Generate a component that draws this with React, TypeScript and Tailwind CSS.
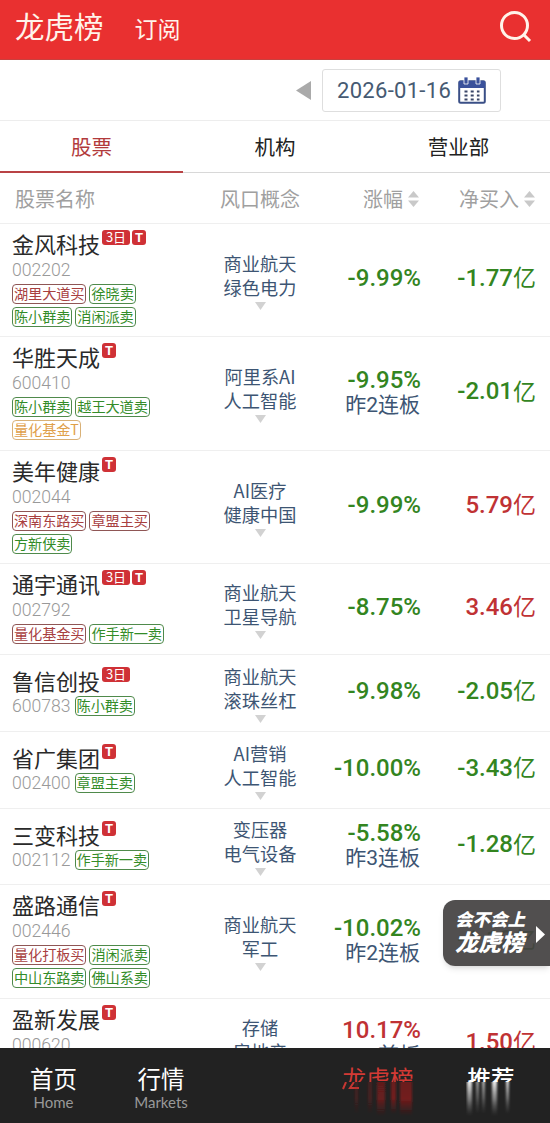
import React from "react";

type Tone = "buy" | "sell" | "quant";

interface Tag {
  text: string;
  tone: Tone;
}

interface Stock {
  name: string;
  code: string;
  badges: string[];
  tags: Tag[];
  inlineTag?: boolean;
  concepts: string[];
  change: string;
  streak?: string;
  net: string;
  rowClass: string;
  changeUp?: boolean;
  netUp?: boolean;
}

const buy = (text: string): Tag => ({ text, tone: "buy" });
const sell = (text: string): Tag => ({ text, tone: "sell" });

const stocks: Stock[] = [
  { name: "金风科技", code: "002202", badges: ["3日", "T"], tags: [buy("湖里大道买"), sell("徐晓卖"), sell("陈小群卖"), sell("消闲派卖")], concepts: ["商业航天", "绿色电力"], change: "-9.99%", net: "-1.77", rowClass: "h-[113px]" },
  { name: "华胜天成", code: "600410", badges: ["T"], tags: [sell("陈小群卖"), sell("越王大道卖"), { text: "量化基金T", tone: "quant" }], concepts: ["阿里系AI", "人工智能"], change: "-9.95%", streak: "昨2连板", net: "-2.01", rowClass: "h-[114px]" },
  { name: "美年健康", code: "002044", badges: ["T"], tags: [buy("深南东路买"), buy("章盟主买"), sell("方新侠卖")], concepts: ["AI医疗", "健康中国"], change: "-9.99%", net: "5.79", netUp: true, rowClass: "h-[113px]" },
  { name: "通宇通讯", code: "002792", badges: ["3日", "T"], tags: [buy("量化基金买"), sell("作手新一卖")], concepts: ["商业航天", "卫星导航"], change: "-8.75%", net: "3.46", netUp: true, rowClass: "h-[91px]" },
  { name: "鲁信创投", code: "600783", badges: ["3日"], tags: [sell("陈小群卖")], inlineTag: true, concepts: ["商业航天", "滚珠丝杠"], change: "-9.98%", net: "-2.05", rowClass: "h-[77px]" },
  { name: "省广集团", code: "002400", badges: ["T"], tags: [sell("章盟主卖")], inlineTag: true, concepts: ["AI营销", "人工智能"], change: "-10.00%", net: "-3.43", rowClass: "h-[77px]" },
  { name: "三变科技", code: "002112", badges: ["T"], tags: [sell("作手新一卖")], inlineTag: true, concepts: ["变压器", "电气设备"], change: "-5.58%", streak: "昨3连板", net: "-1.28", rowClass: "h-[76px]" },
  { name: "盛路通信", code: "002446", badges: ["T"], tags: [buy("量化打板买"), sell("消闲派卖"), sell("中山东路卖"), sell("佛山系卖")], concepts: ["商业航天", "军工"], change: "-10.02%", streak: "昨2连板", net: "-1.12", rowClass: "h-[114px]" },
  { name: "盈新发展", code: "000620", badges: ["T"], tags: [], concepts: ["存储", "房地产"], change: "10.17%", streak: "首板", net: "1.50", changeUp: true, netUp: true, rowClass: "h-[91px]" },
];

const toneClass: Record<Tone, string> = {
  buy: "text-[#a8403f] border-[#8f5655]",
  sell: "text-[#338c28] border-[#4f8a4b]",
  quant: "text-[#dfa04a] border-[#d9b177]",
};

function TagBox({ tag }: { tag: Tag }) {
  return (
    <span className={`flex h-5 items-center rounded-[4px] border px-px pb-px text-[14.2px] leading-none tracking-[-0.1px] whitespace-nowrap ${toneClass[tag.tone]}`}>
      {tag.text}
    </span>
  );
}

function SortIcon() {
  return (
    <svg width="11" height="16" viewBox="0 0 11 16" fill="#c9c9c9">
      <path d="M5.5 0 11 6.5H0z" />
      <path d="M5.5 16 0 9.5h11z" />
    </svg>
  );
}

function StockRow({ stock }: { stock: Stock }) {
  return (
    <div className={`flex shrink-0 border-b border-[#efefef] ${stock.rowClass}`}>
      {/* Name, code and seats */}
      <div className={`w-[188px] shrink-0 pl-3 ${stock.inlineTag ? "pt-3" : "pt-1.5"}`}>
        <div className="flex h-7 items-start">
          <span className="text-[22px] leading-[26px] text-[#2a2a2a]">{stock.name}</span>
          <div className="ml-0.5 flex gap-0.5">
            {stock.badges.map((b) => (
              <span
                key={b}
                className={`flex h-[15px] items-center justify-center rounded-[3px] bg-[#cf3136] leading-none text-white ${b === "T" ? "w-[14px] font-[Roboto] text-[13px] font-bold" : "w-7 pb-0.5 text-[13px]"}`}
              >
                {b}
              </span>
            ))}
          </div>
        </div>
        {stock.inlineTag ? (
          <div className="-mt-px flex items-center gap-1">
            <span className="font-[Roboto] text-[17.6px] leading-6 font-light text-[#999]">{stock.code}</span>
            <TagBox tag={stock.tags[0]} />
          </div>
        ) : (
          <>
            <div className="font-[Roboto] text-[17.6px] leading-6 font-light text-[#999]">{stock.code}</div>
            <div className="mt-0.5 flex flex-wrap gap-[3px]">
              {stock.tags.map((t) => (
                <TagBox key={t.text} tag={t} />
              ))}
            </div>
          </>
        )}
      </div>

      {/* Concepts */}
      <div className="flex w-[144px] shrink-0 flex-col items-center justify-center text-[18.2px] leading-6 text-[#3d5573]">
        {stock.concepts.map((c) => (
          <span key={c}>{c}</span>
        ))}
        <svg className="mt-[3px]" width="11" height="8" viewBox="0 0 11 8" fill="#d2d2d2">
          <path d="M0 0h11L5.5 8z" />
        </svg>
      </div>

      {/* Change */}
      <div className="flex w-[89px] shrink-0 flex-col items-end justify-center pb-[3px]">
        <span className={`font-[Roboto] text-[24px] leading-[25px] font-medium whitespace-nowrap ${stock.changeUp ? "text-[#c03234]" : "text-[#33851f]"}`}>{stock.change}</span>
        {stock.streak && (
          <span className="pr-px font-[Roboto,'Noto_Sans_CJK_SC',sans-serif] text-[21px] leading-6 text-[#3d5573]">{stock.streak}</span>
        )}
      </div>

      {/* Net buy */}
      <div className={`flex flex-1 items-center justify-end pr-[14px] pb-[3px] ${stock.netUp ? "text-[#c03234]" : "text-[#33851f]"}`}>
        <span className="pb-0.5 font-[Roboto] text-[24px] leading-7 font-medium">{stock.net}</span>
        <span className="pb-[5px] text-[23px] leading-7">亿</span>
      </div>
    </div>
  );
}

export default function App() {
  return (
    <div className="relative flex h-[1123px] w-[550px] flex-col overflow-hidden bg-white font-['Noto_Sans_CJK_SC',sans-serif]">
      {/* Header */}
      <header className="flex h-[60px] shrink-0 items-center border-b border-[#c9403e] bg-[#e93030] pl-[15px] text-[#fff3ea]">
        <h1 className="pb-2.5 text-[29.5px] leading-9">龙虎榜</h1>
        <span className="ml-[31px] pb-[3px] text-[23px] leading-8">订阅</span>
        <svg className="mr-[18px] mb-[7px] ml-auto" width="33" height="33" viewBox="0 0 33 33" fill="none" stroke="currentColor" strokeWidth="3">
          <circle cx="15.5" cy="15.5" r="13" />
          <path d="m24 24 7 7" />
        </svg>
      </header>

      {/* Date picker */}
      <div className="flex h-[61px] shrink-0 items-center justify-end border-b border-[#ededed] pr-[49px]">
        <svg width="15" height="19" viewBox="0 0 15 19" fill="#aaa">
          <path d="M15 0v19L0 9.5z" />
        </svg>
        <div className="ml-[11px] flex h-[43px] w-[179px] items-center rounded-[3px] border border-[#dedede] pl-[14px]">
          <span className="w-[115px] font-[Roboto] text-[22px] tracking-[0.3px] whitespace-nowrap text-[#465a72]">2026-01-16</span>
          <svg className="ml-[6px]" width="28" height="27" viewBox="0 0 28 27">
            <rect x="1.2" y="4.2" width="25.6" height="21.6" rx="1.5" fill="#fff" stroke="#3a4f86" strokeWidth="2" />
            <path d="M1 4h26v7H1z" fill="#3a519b" />
            <path d="M6 0h4v7H6zM18 0h4v7h-4z" fill="#3a519b" stroke="#fff" strokeWidth="0.8" />
            <path d="M6.5 14.5h15M6.5 18.5h15M6.5 22.5h15" stroke="#3a4668" strokeWidth="2" strokeDasharray="3 3.2" />
          </svg>
        </div>
      </div>

      {/* Tabs */}
      <div className="flex h-[52px] shrink-0 border-b border-[#d8d8d8] text-center text-[20.5px] leading-[51px] text-[#222]">
        <div className="h-[52px] w-[183px] border-b-2 border-[#b94345] text-[#b23a3c]">股票</div>
        <div className="w-[184px]">机构</div>
        <div className="w-[183px]">营业部</div>
      </div>

      {/* Column titles */}
      <div className="flex h-[51px] shrink-0 items-center border-b border-[#efefef] pt-0.5 text-[20px] text-[#a0a0a0]">
        <span className="w-[188px] pl-[15px]">股票名称</span>
        <span className="w-[144px] text-center">风口概念</span>
        <span className="flex w-[87px] items-center justify-end gap-[5px]">涨幅<SortIcon /></span>
        <span className="flex flex-1 items-center justify-end gap-[5px] pr-[15px]">净买入<SortIcon /></span>
      </div>

      <main className="flex min-h-0 flex-1 flex-col overflow-hidden">
        {stocks.map((s) => (
          <StockRow key={s.code} stock={s} />
        ))}
      </main>

      {/* Bottom navigation */}
      <nav className="flex h-[75px] shrink-0 bg-[#222] text-center text-white">
        <div className="w-[107px] pt-4">
          <div className="text-[23.5px] leading-7">首页</div>
          <div className="font-[Lato] text-[15px] leading-5 text-[#999]">Home</div>
        </div>
        <div className="w-[108px] pt-4">
          <div className="text-[23.5px] leading-7">行情</div>
          <div className="font-[Lato] text-[15px] leading-5 text-[#999]">Markets</div>
        </div>
        <div className="ml-auto w-[72px] pt-4">
          <div className="h-[18px] overflow-hidden text-[23.7px] leading-7 whitespace-nowrap text-[#d33a35]">龙虎榜</div>
          <svg width="72" height="36" viewBox="0 0 72 36">
            <defs>
              <linearGradient id="redFade" x1="0" y1="0" x2="0" y2="1">
                <stop offset="0" stopColor="#8a1a1a" stopOpacity="0.7" />
                <stop offset="0.5" stopColor="#961b1b" stopOpacity="0.7" />
                <stop offset="1" stopColor="#7a1616" stopOpacity="0" />
              </linearGradient>
              <filter id="redSoft" x="-10%" y="0" width="120%" height="100%">
                <feGaussianBlur stdDeviation="1.3 0" />
              </filter>
            </defs>
            <path d="m4 0-3 7M12 0l-4 6h9" stroke="#c53732" strokeWidth="2" fill="none" />
            <g fill="url(#redFade)" filter="url(#redSoft)">
              <rect x="13" width="3" height="32" opacity="0.45" />
              <rect x="26" width="4" height="32" opacity="0.45" />
              <rect x="35" width="8" height="34" opacity="0.85" />
              <rect x="49" width="5" height="32" />
              <rect x="58" width="12" height="34" />
            </g>
          </svg>
        </div>
        <div className="mr-[34px] ml-[52px] w-[50px] pt-4">
          <div className="h-[18px] overflow-hidden text-[23.5px] leading-7 font-medium">推荐</div>
          <svg width="50" height="36" viewBox="0 0 50 36">
            <defs>
              <linearGradient id="whiteFade" x1="0" y1="0" x2="0" y2="1">
                <stop offset="0" stopColor="#fff" stopOpacity="0.9" />
                <stop offset="0.5" stopColor="#bbb" stopOpacity="0.6" />
                <stop offset="1" stopColor="#777" stopOpacity="0" />
              </linearGradient>
              <filter id="whiteSoft" x="-10%" y="0" width="120%" height="100%">
                <feGaussianBlur stdDeviation="0.8 0" />
              </filter>
            </defs>
            <g fill="url(#whiteFade)" filter="url(#whiteSoft)">
              <rect x="1" width="5" height="34" />
              <rect x="10" width="3" height="32" opacity="0.6" />
              <rect x="16" width="3" height="32" opacity="0.7" />
              <rect x="26" width="5" height="34" />
              <rect x="40" width="3" height="32" opacity="0.9" />
            </g>
          </svg>
        </div>
      </nav>

      {/* Floating shortcut */}
      <button className="absolute top-[900px] right-0 flex h-[66px] w-[107px] items-center rounded-l-xl bg-[#444242]/93 pb-[5px] pl-[12px] text-white shadow-md">
        <span className="w-[72px] text-left font-black whitespace-nowrap italic">
          <span className="block text-[17.5px] leading-[21px]">会不会上</span>
          <span className="block text-[23px] leading-[25px]">龙虎榜</span>
        </span>
        <svg className="mt-2 ml-[9px]" width="9" height="17" viewBox="0 0 9 17" fill="#fff">
          <path d="M0 0v17l9-8.5z" />
        </svg>
      </button>
    </div>
  );
}
